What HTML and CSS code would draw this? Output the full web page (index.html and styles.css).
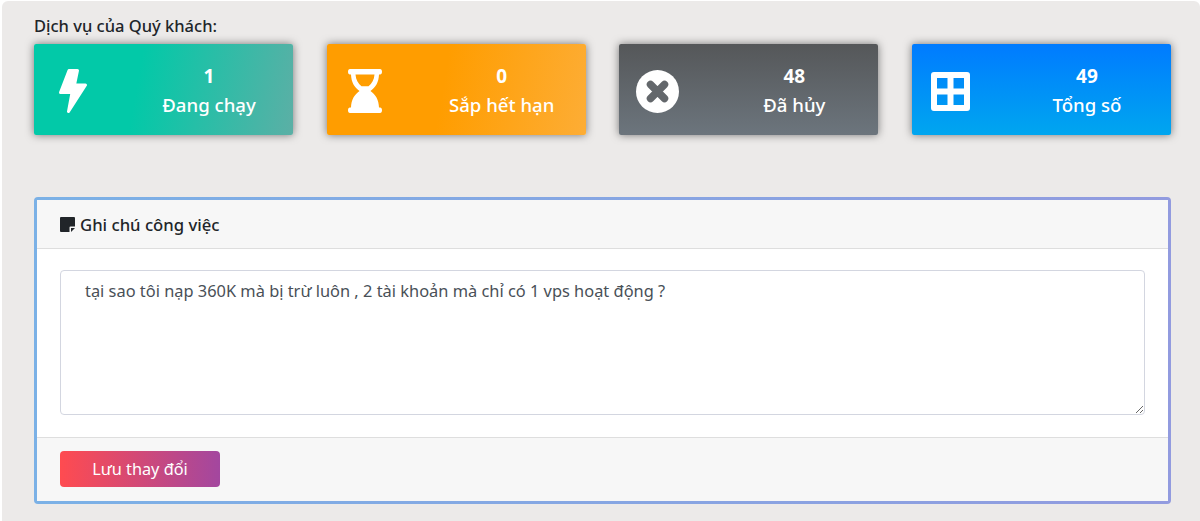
FILE: index.html
```html
<!DOCTYPE html>
<html lang="vi">
<head>
<meta charset="utf-8">
<title>Dịch vụ</title>
<link rel="stylesheet" href="styles.css">
</head>
<body>
<main class="panel">
  <h2 class="title">Dịch vụ của Quý khách:</h2>
  <section class="stats">
    <div class="stat stat-green">
      <svg class="ico" viewBox="0 0 28 44" width="28" height="44"><path fill="#fff" stroke="#fff" stroke-width="3" stroke-linejoin="round" d="M10 1.500h8.500L15.500 16H26.500L9.500 42.500 13 23.500H1.500z"/></svg>
      <div class="stat-text"><b>1</b><span>Đang chạy</span></div>
    </div>
    <div class="stat stat-orange">
      <svg class="ico" viewBox="0 0 34 44" width="34" height="44"><path fill="#fff" fill-rule="evenodd" d="M2 0h30c1.400 0 2 1.200 2 2.700s-.6 2.800-2 2.800h-1c-.3 8-3.500 13-8.500 16.500 5 3.500 8.200 8.500 8.500 16.500h1c1.400 0 2 1.200 2 2.700S33.400 44 32 44H2c-1.400 0-2-1.300-2-2.800s.6-2.700 2-2.700h1c.3-8 3.500-13 8.500-16.500C6.500 18.500 3.300 13.500 3 5.500H2C.6 5.500 0 4.200 0 2.700S.6 0 2 0zM7.500 5.500c.4 5.200 2.500 9.200 6 11.700h7c3.500-2.500 5.600-6.500 6-11.700z"/></svg>
      <div class="stat-text"><b>0</b><span>Sắp hết hạn</span></div>
    </div>
    <div class="stat stat-gray">
      <svg class="ico" viewBox="0 0 43 43" width="43" height="43"><circle cx="21.500" cy="21.500" r="21.500" fill="#fff"/><path stroke="#63676b" stroke-width="7.500" stroke-linecap="round" d="M14.500 14.500l14 14M28.500 14.500l-14 14"/></svg>
      <div class="stat-text"><b>48</b><span>Đã hủy</span></div>
    </div>
    <div class="stat stat-blue">
      <svg class="ico" viewBox="0 0 39 39" width="39" height="39"><path fill="#fff" fill-rule="evenodd" d="M3 0h33a3 3 0 0 1 3 3v33a3 3 0 0 1-3 3H3a3 3 0 0 1-3-3V3a3 3 0 0 1 3-3zM6 6v10.500h10.500V6zm16.500 0v10.500H33V6zM6 22.500V33h10.500V22.500zm16.500 0V33H33V22.500z"/></svg>
      <div class="stat-text"><b>49</b><span>Tổng số</span></div>
    </div>
  </section>
  <section class="card">
    <header class="card-head">
      <svg class="note" viewBox="0 0 15 15" width="15" height="15"><path fill="#212529" d="M1 0h13a1 1 0 0 1 1 1v8.500h-4.500a1 1 0 0 0-1 1V15H1a1 1 0 0 1-1-1V1a1 1 0 0 1 1-1zM11 11h4l-4 4z"/></svg>
      <span>Ghi chú công việc</span>
    </header>
    <div class="card-body">
      <textarea class="input">tại sao tôi nạp 360K mà bị trừ luôn , 2 tài khoản mà chỉ có 1 vps hoạt động ?</textarea>
    </div>
    <footer class="card-foot">
      <button class="btn" type="button">Lưu thay đổi</button>
    </footer>
  </section>
</main>
</body>
</html>
```

FILE: styles.css
```css
* { box-sizing: border-box; }
html, body { margin: 0; padding: 0; background: #fff; }
body {
  height: 521px;
  overflow: hidden;
  font-family: "Noto Sans", "Open Sans", "Liberation Sans", sans-serif;
  color: #212529;
}
.panel {
  margin: 1px 0 0 2px;
  height: 520px;
  padding: 14px 29px 0 32px;
  background: #ecEAe9;
  border-radius: 6px 6px 0 0;
}
.title {
  margin: 0 0 7px;
  height: 22px;
  font-size: 16.500px;
  line-height: 22px;
  font-weight: 500;
}
.stats {
  display: grid;
  grid-template-columns: repeat(4, 259px);
  justify-content: space-between;
}
.stat {
  height: 91px;
  display: grid;
  grid-template-columns: 91px 1fr;
  align-items: center;
  color: #fff;
  border-radius: 2px;
  box-shadow: 0 0 8px rgba(0, 0, 0, .5);
}
.stat-green { background: linear-gradient(100deg, #02c9a8 40%, #6aaba5 110%); }
.stat-orange { background: linear-gradient(100deg, #ff9d00 45%, #fdad35 100%); }
.stat-gray { background: linear-gradient(180deg, #555759, #6c757d); }
.stat-blue { background: linear-gradient(180deg, #007bff, #00a6ef); }
.ico { margin: 3px 0 0 25px; }
.stat-orange .ico { margin-left: 21px; }
.stat-gray .ico { margin-left: 17px; }
.stat-blue .ico { margin-left: 19px; }
.stat-text {
  margin-top: 2px;
  text-align: center;
  display: flex;
  flex-direction: column;
  gap: 5px;
  line-height: 24px;
  font-size: 18.600px;
}
.stat-text b { font-weight: 700; font-size: 19px; }
.stat-text span { font-weight: 500; }
.card {
  margin-top: 62px;
  width: 1137px;
  height: 307px;
  border: 3px solid transparent;
  border-radius: 4px;
  background: linear-gradient(#fff, #fff) padding-box, linear-gradient(90deg, #7bb1e6, #929bdf) border-box;
  display: flex;
  flex-direction: column;
}
.card-head {
  height: 49px;
  padding: 1px 23px 0;
  background: #f7f7f7;
  border-bottom: 1px solid #dedede;
  display: flex;
  align-items: center;
  gap: 5px;
  font-size: 16.700px;
  font-weight: 500;
}
.note { flex: none; }
.card-body { flex: 1; padding: 21px 23px; background: #fff; }
.input {
  display: block;
  width: 100%;
  height: 145px;
  padding: 9px 24px;
  border: 1px solid #d3d6e0;
  border-radius: 4px;
  background: #fff;
  color: #495057;
  font: 400 16.400px/22px "Noto Sans", "Open Sans", sans-serif;
}
.card-foot {
  height: 64px;
  padding: 13px 23px;
  background: #f7f7f7;
  border-top: 1px solid #dedede;
}
.btn {
  display: block;
  width: 160px;
  height: 36px;
  padding: 0;
  border: 0;
  border-radius: 4px;
  background: linear-gradient(90deg, #ff4b50, #a3479f);
  color: #fff;
  font: 400 16.300px/36px "Noto Sans", "Open Sans", sans-serif;
}
```
